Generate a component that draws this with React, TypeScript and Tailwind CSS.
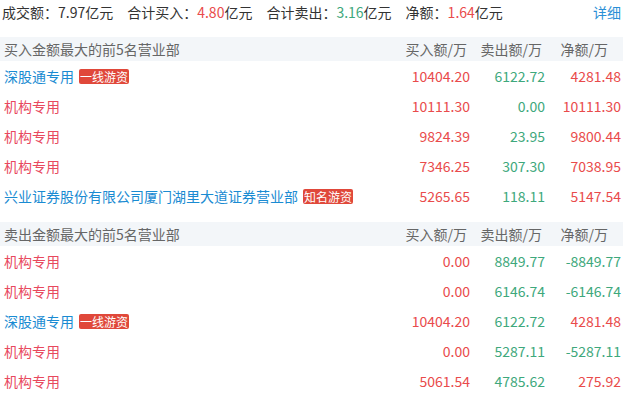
import React from 'react';

type Row = {
  name: string;
  tag?: string;
  buy: string;
  sell: string;
  net: string;
};

const buyRows: Row[] = [
  { name: '深股通专用', tag: '一线游资', buy: '10404.20', sell: '6122.72', net: '4281.48' },
  { name: '机构专用', buy: '10111.30', sell: '0.00', net: '10111.30' },
  { name: '机构专用', buy: '9824.39', sell: '23.95', net: '9800.44' },
  { name: '机构专用', buy: '7346.25', sell: '307.30', net: '7038.95' },
  { name: '兴业证券股份有限公司厦门湖里大道证券营业部', tag: '知名游资', buy: '5265.65', sell: '118.11', net: '5147.54' },
];

const sellRows: Row[] = [
  { name: '机构专用', buy: '0.00', sell: '8849.77', net: '-8849.77' },
  { name: '机构专用', buy: '0.00', sell: '6146.74', net: '-6146.74' },
  { name: '深股通专用', tag: '一线游资', buy: '10404.20', sell: '6122.72', net: '4281.48' },
  { name: '机构专用', buy: '0.00', sell: '5287.11', net: '-5287.11' },
  { name: '机构专用', buy: '5061.54', sell: '4785.62', net: '275.92' },
];

const RED = 'text-[#e94b4b]';
const GREEN = 'text-[#3ea87c]';

const Table: React.FC<{ title: string; rows: Row[] }> = ({ title, rows }) => (
  <div>
    {/* header band */}
    <div className="flex h-[24px] items-center bg-[#f3f6f9] text-[#666] pl-[4px]">
      <div className="flex-1">{title}</div>
      <div className="w-[80px] text-right pr-[3px]">买入额/万</div>
      <div className="w-[75px] text-right pr-[3px]">卖出额/万</div>
      <div className="w-[78px] text-right pr-[15px]">净额/万</div>
    </div>
    {rows.map((r, i) => {
      const isInst = r.name === '机构专用';
      return (
        <div key={i} className="flex h-[30px] items-center pl-[4px]">
          <div className="flex-1 flex items-center">
            <span className={isInst ? 'text-[#e8495e]' : 'text-[#1a8bd2]'}>{r.name}</span>
            {r.tag && (
              <span className="ml-[5px] bg-[#e0483a] text-white text-[12px] leading-[15px] px-[1px] rounded-[2px]">
                {r.tag}
              </span>
            )}
          </div>
          <div className={`w-[80px] text-right ${RED}`}>{r.buy}</div>
          <div className={`w-[75px] text-right ${GREEN}`}>{r.sell}</div>
          <div className={`w-[78px] text-right pr-[2px] ${r.net.startsWith('-') ? GREEN : RED}`}>{r.net}</div>
        </div>
      );
    })}
  </div>
);

export default function App() {
  return (
    <div
      className="w-[623px] bg-white text-[14px] text-[#333]"
      style={{ fontFamily: '"Noto Sans CJK SC", "Noto Sans", sans-serif' }}
    >
      <div className="flex h-[37px] leading-[24px] pl-[2px] pr-[2px]">
        <div className="flex gap-[14px] flex-1">
          <span>成交额：7.97亿元</span>
          <span>合计买入：<span className={RED}>4.80</span>亿元</span>
          <span>合计卖出：<span className={GREEN}>3.16</span>亿元</span>
          <span>净额：<span className={RED}>1.64</span>亿元</span>
        </div>
        <span className="text-[#2a8fd6]">详细</span>
      </div>
      <Table title="买入金额最大的前5名营业部" rows={buyRows} />
      <div className="h-[11px]" />
      <Table title="卖出金额最大的前5名营业部" rows={sellRows} />
    </div>
  );
}
